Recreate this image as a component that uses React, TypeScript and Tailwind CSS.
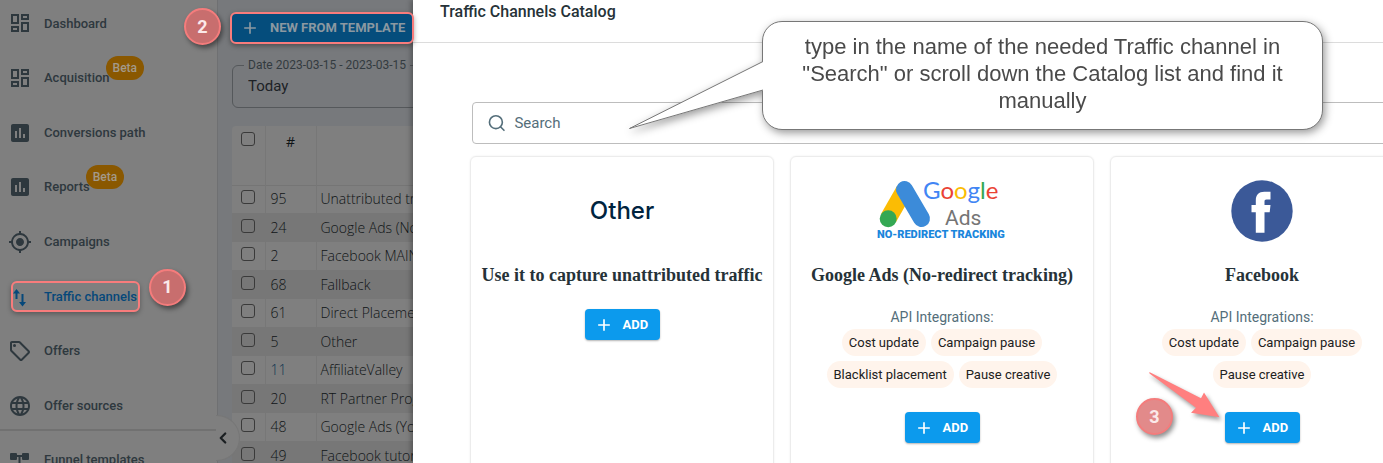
import type { ReactNode } from "react";
import {
  MdAdd,
  MdAssessment,
  MdLanguage,
  MdMyLocation,
  MdOutlineDashboard,
  MdOutlineLocalOffer,
} from "react-icons/md";
import { ChevronLeft, Search } from "lucide-react";

interface NavItem {
  label: string;
  icon: ReactNode;
  beta?: boolean;
  active?: boolean;
}

interface Channel {
  name: string;
  logo: ReactNode;
  integrations: string[];
  step?: string;
}

function TrafficIcon() {
  return (
    <svg viewBox="0 0 24 24" className="size-6" fill="none" stroke="currentColor" strokeWidth="2">
      <path d="M8.500 15V7" />
      <path d="M14.500 10v10" />
      <path d="M5 9.500 8.500 5l3.500 4.500zM11 18l3.500 4.500L18 18z" fill="currentColor" stroke="none" />
    </svg>
  );
}

function FunnelIcon() {
  return (
    <svg viewBox="0 0 24 24" className="size-6" fill="currentColor">
      <rect x="2" y="5" width="7" height="7" rx="1" />
      <rect x="14" y="5" width="7" height="7" rx="1" />
      <rect x="8" y="15" width="7" height="7" rx="1" />
      <path d="M8 7h7v2h-2.500v7h-2V9H8z" />
    </svg>
  );
}

const navItems: NavItem[] = [
  { label: "Dashboard", icon: <MdOutlineDashboard size={24} /> },
  { label: "Acquisition", icon: <MdOutlineDashboard size={24} />, beta: true },
  { label: "Conversions path", icon: <MdAssessment size={24} /> },
  { label: "Reports", icon: <MdAssessment size={24} />, beta: true },
  { label: "Campaigns", icon: <MdMyLocation size={24} /> },
  { label: "Traffic channels", icon: <TrafficIcon />, active: true },
  { label: "Offers", icon: <MdOutlineLocalOffer size={24} /> },
  { label: "Offer sources", icon: <MdLanguage size={24} /> },
];

const rows = [
  { id: 95, name: "Unattributed traffic" },
  { id: 24, name: "Google Ads (No-redirect)" },
  { id: 2, name: "Facebook MAIN" },
  { id: 68, name: "Fallback" },
  { id: 61, name: "Direct Placement" },
  { id: 5, name: "Other" },
  { id: 11, name: "AffiliateValley", visited: true },
  { id: 20, name: "RT Partner Program" },
  { id: 48, name: "Google Ads (YouTube)" },
  { id: 49, name: "Facebook tutorial" },
];

function OtherLogo() {
  return <span className="font-[Inter] text-2xl leading-7 font-medium text-[#00243f]">Other</span>;
}

function GoogleAdsLogo() {
  return (
    <svg viewBox="0 0 132 64" className="h-16 w-[132px] overflow-visible" role="img" aria-label="Google Ads">
      <path d="M28.500 11 12.500 39" stroke="#fbbc04" strokeWidth="17" />
      <path d="M28.500 10.500 45.500 39.500" stroke="#3c8bd9" strokeWidth="17" strokeLinecap="round" />
      <circle cx="12.200" cy="39.700" r="8.500" fill="#34a853" />
      <text x="47" y="20" fontFamily="Lato, sans-serif" fontSize="24" strokeWidth="0.300">
        <tspan fill="#4285f4">G</tspan>
        <tspan fill="#ea4335">o</tspan>
        <tspan fill="#fbbc04">o</tspan>
        <tspan fill="#4285f4">g</tspan>
        <tspan fill="#34a853">l</tspan>
        <tspan fill="#ea4335">e</tspan>
      </text>
      <text x="69" y="46" fontFamily="Roboto, sans-serif" fontSize="21" fill="#757575">
        Ads
      </text>
      <text x="1" y="59" fontFamily="Roboto, sans-serif" fontSize="11" fontWeight="900" fill="#1a86dc">
        NO-REDIRECT TRACKING
      </text>
    </svg>
  );
}

function FacebookLogo() {
  return (
    <svg viewBox="0 0 62 62" className="size-[62px]" role="img" aria-label="Facebook">
      <circle cx="31" cy="31" r="30.700" fill="#3b5998" />
      <path
        d="M24.800 52.700V32.300h-4.300V25h4.300v-4.500c0-5.500 3-8.800 8.500-8.800h6.200v7.800h-4c-1.500 0-2 .7-2 2V25h6l-.8 7.300h-5.200v20.400z"
        fill="#fff"
      />
    </svg>
  );
}

const channels: Channel[] = [
  { name: "Use it to capture unattributed traffic", logo: <OtherLogo />, integrations: [] },
  {
    name: "Google Ads (No-redirect tracking)",
    logo: <GoogleAdsLogo />,
    integrations: ["Cost update", "Campaign pause", "Blacklist placement", "Pause creative"],
  },
  {
    name: "Facebook",
    logo: <FacebookLogo />,
    integrations: ["Cost update", "Campaign pause", "Pause creative"],
    step: "3",
  },
];

function StepBadge({ children, className }: { children: string; className: string }) {
  return (
    <span
      className={`absolute z-30 flex size-[37px] items-center justify-center rounded-full border-2 border-[#f47c7c] text-lg font-bold text-[#fbe9e9] shadow-[2px_3px_5px_rgba(0,0,0,0.45)] ${className}`}
    >
      {children}
    </span>
  );
}

function NavLink({ item }: { item: NavItem }) {
  return (
    <a
      href="#"
      className={`relative flex h-full items-center gap-3 pl-2 text-[13px] font-medium ${
        item.active ? "text-[#06487a]" : "text-[#2e383e]"
      }`}
    >
      {item.active && (
        <span className="absolute left-[11px] h-[31px] w-[129px] rounded-md border-2 border-[#f87c7c] shadow-[0_2px_5px_rgba(0,0,0,0.3)]" />
      )}
      {item.icon}
      <span className="relative">
        {item.label}
        {item.beta && (
          <span className="absolute bottom-2 left-full -ml-1 flex h-6 items-center rounded-full bg-[#8a5800] px-[7px] text-xs text-[#a39a8a]">
            Beta
          </span>
        )}
      </span>
      {item.active && <StepBadge className="bottom-[18px] left-[149px] bg-[#c86e6e]">1</StepBadge>}
    </a>
  );
}

function Sidebar() {
  return (
    <nav className="relative w-[218px] flex-none border-r border-[#6f7072] bg-[#7f7f7f]">
      <ul className="-mt-1 grid h-[437px] auto-rows-fr">
        {navItems.map((item) => (
          <li key={item.label}>
            <NavLink item={item} />
          </li>
        ))}
      </ul>
      <div className="-mt-1 h-[60px] border-t-2 border-[#717171]">
        <NavLink item={{ label: "Funnel templates", icon: <FunnelIcon /> }} />
      </div>
      <button
        aria-label="Collapse menu"
        className="absolute top-[415px] left-full z-[5] -ml-px flex h-[46px] w-6 items-center rounded-r-full border border-l-0 border-[#777] bg-[#7f7f7f] text-[#1b1f22]"
      >
        <ChevronLeft size={18} strokeWidth={3} className="-ml-0.5" />
      </button>
    </nav>
  );
}

const checkboxClass =
  "block size-[14px] appearance-none rounded-[3px] border border-[#3a3a3a] bg-transparent";

function ChannelList() {
  return (
    <main className="w-[195px] flex-none bg-[#77797c] pt-3 pl-[14px]">
      <div className="relative -ml-0.5 h-8">
        <button className="relative z-20 flex h-full w-[184px] items-center gap-2.5 rounded-md border-2 border-[#f87c7c] bg-[#054d7c] pl-2 text-[13px] font-bold whitespace-nowrap text-[#8b98a1] shadow-[0_2px_5px_rgba(0,0,0,0.35)]">
          <MdAdd size={20} className="flex-none" />
          NEW FROM TEMPLATE
        </button>
        <StepBadge className="-top-1 -left-[46px] bg-[#c86e6e]">2</StepBadge>
      </div>
      <fieldset className="mt-3 h-[52px] w-[260px] rounded-md border border-[#55585b] px-[11px]">
        <legend className="px-1 text-xs leading-[18px] text-[#333b40]">Date 2023-03-15 - 2023-03-15</legend>
        <input
          aria-label="Date range"
          defaultValue="Today"
          className="block w-full bg-transparent px-1 text-[15px] leading-6 text-[#1d2226]"
        />
      </fieldset>
      <table className="mt-[18px] w-[360px] table-fixed border-collapse rounded-t bg-[#7f7f7f] font-['Open_Sans'] text-[14px] font-light text-[#0f1416]">
        <thead>
          <tr className="h-[59px] border-b border-[#757575] align-top">
            <th className="w-[33px] border-r border-[#777] pt-[6px] pl-[9px]">
              <input type="checkbox" aria-label="Select all" className={checkboxClass} />
            </th>
            <th className="w-[51px] border-r border-[#777] pt-[5px] font-normal">#</th>
            <th className="pt-[5px] font-normal" aria-label="Name" />
          </tr>
        </thead>
        <tbody>
          {rows.map((row) => (
            <tr key={row.id} className="odd:h-7 even:h-[29px] even:bg-[#777]">
              <td className="border-r border-[#777] pb-1 pl-[9px]">
                <input type="checkbox" aria-label={`Select ${row.name}`} className={checkboxClass} />
              </td>
              <td className={`border-r border-[#777] pl-[5px] leading-5 ${row.visited ? "text-[#0a3350]" : ""}`}>
                {row.id}
              </td>
              <td className="pl-1 leading-5 whitespace-nowrap">{row.name}</td>
            </tr>
          ))}
        </tbody>
      </table>
    </main>
  );
}

function ChannelCard({ channel }: { channel: Channel }) {
  return (
    <article className="relative flex h-[330px] w-[304px] flex-none flex-col items-center rounded-md border border-[#ececec] pt-[22px] shadow-[0_0_2px_rgba(0,0,0,0.08)]">
      <div className="flex h-16 items-center">{channel.logo}</div>
      <h2 className="mt-5 font-['Liberation_Serif'] text-[18px] leading-6 font-bold whitespace-nowrap text-[#263238]">
        {channel.name}
      </h2>
      {channel.integrations.length > 0 && (
        <div className="mt-5 mb-0.5 text-center">
          <p className="text-sm leading-5 text-[#546e7a]">API Integrations:</p>
          <ul className="mt-0.5 flex w-[240px] flex-wrap justify-center gap-[5px]">
            {channel.integrations.map((tag) => (
              <li key={tag} className="h-[27px] rounded-full bg-[#fff4ec] px-[7px] text-[13px] leading-[27px] text-[#212121]">
                {tag}
              </li>
            ))}
          </ul>
        </div>
      )}
      <button className="mt-[22px] flex h-[31px] w-[75px] items-center gap-[9px] rounded-[4px] bg-[#0c9aed] pl-[9px] text-[13px] font-bold text-white shadow-[0_1px_2px_rgba(0,0,0,0.3)]">
        <MdAdd size={20} />
        ADD
      </button>
      {channel.step && (
        <>
          <svg viewBox="0 0 74 50" className="absolute top-[212px] left-[36px] z-20 h-[50px] w-[74px] overflow-visible drop-shadow-[2px_3px_2px_rgba(0,0,0,0.4)]">
            <path d="M2.300 3 54 29.300 57 23.500 72.500 48.300 44 43.700 49 38.700 2.500 4.500z" fill="#ff7f7f" />
          </svg>
          <StepBadge className="top-[241px] left-[25px] bg-[#e28a8a]">{channel.step}</StepBadge>
        </>
      )}
    </article>
  );
}

function Callout() {
  return (
    <div className="absolute top-[21px] left-[349px] z-20 w-[561px] drop-shadow-[2px_3px_4px_rgba(0,0,0,0.4)]">
      <p className="h-[109px] rounded-[20px] border border-[#777] bg-white px-8 pt-[11px] text-center font-['Liberation_Sans'] text-[22px] leading-[27px] text-[#4a4a4a]">
        type in the name of the needed Traffic channel in "Search" or scroll down the Catalog list and find it manually
      </p>
      <svg viewBox="0 0 135 70" className="absolute top-[40px] -left-[133px] h-[70px] w-[135px]">
        <path d="M135 0 0 68 135 29z" fill="#fff" />
        <path d="M134 .5 .5 67.500 134 29" fill="none" stroke="#777" />
      </svg>
    </div>
  );
}

function CatalogDrawer() {
  return (
    <section className="relative z-10 min-w-0 flex-1 bg-white shadow-[-2px_0_5px_rgba(0,0,0,0.3)]">
      <header className="h-[43px] border-b border-[#dcdcdc] pl-[27px]">
        <h1 className="text-base leading-6 font-medium text-[#263238]">Traffic Channels Catalog</h1>
      </header>
      <Callout />
      <div className="h-[420px] overflow-hidden pt-[59px] pl-[57px]">
        <div className="min-w-[944px]">
          <label className="ml-0.5 flex h-[42px] items-center gap-2 rounded-[4px] border border-[#bdbdbd] pl-[14px] text-[#546e7a]">
            <Search size={20} strokeWidth={2} />
            <input
              type="search"
              aria-label="Search"
              placeholder="Search"
              className="w-full bg-transparent text-[15px] outline-none placeholder:text-[#546e7a]"
            />
          </label>
          <div className="mt-3 flex gap-4">
            {channels.map((channel) => (
              <ChannelCard key={channel.name} channel={channel} />
            ))}
          </div>
        </div>
      </div>
    </section>
  );
}

export default function App() {
  return (
    <div className="flex h-screen overflow-hidden bg-white font-[Roboto]">
      <Sidebar />
      <ChannelList />
      <CatalogDrawer />
    </div>
  );
}
